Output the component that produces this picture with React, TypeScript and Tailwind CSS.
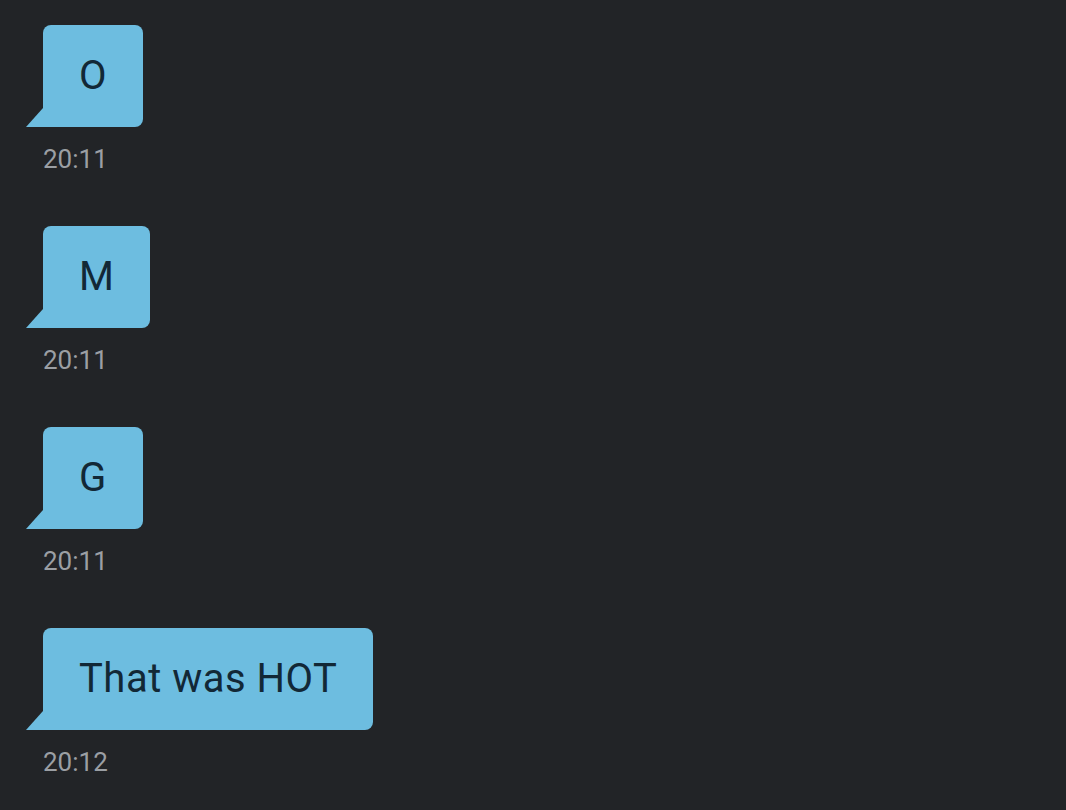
const messages = [
  { text: "O", time: "20:11" },
  { text: "M", time: "20:11" },
  { text: "G", time: "20:11" },
  { text: "That was HOT", time: "20:12" },
];

const Bubble = ({ text }: { text: string }) => {
  return (
    <div className="relative flex h-[102px] w-fit items-center rounded-lg rounded-bl-none bg-[#6dbde0] pl-[36px] pr-[36px]">
      {/* tail */}
      <svg
        className="absolute bottom-0 left-[-17px]"
        width="17"
        height="19"
        viewBox="0 0 17 19"
      >
        <polygon points="0,19 17,0 17,19" fill="#6dbde0" />
      </svg>
      <span className="text-[40px] leading-none tracking-[0.5px] text-[#122836]">{text}</span>
    </div>
  );
};

const App = () => {
  return (
    <div
      className="h-[810px] w-full overflow-hidden bg-[#222427] pl-[43px] pt-[25px]"
      style={{ fontFamily: "Roboto, 'Noto Sans', sans-serif" }}
    >
      <div className="flex flex-col gap-[52px]">
        {messages.map((m, i) => (
          <div key={i} className="flex flex-col">
            <Bubble text={m.text} />
            <span className="mt-[17px] text-[26px] leading-[30px] text-[#9b9fa4]">{m.time}</span>
          </div>
        ))}
      </div>
    </div>
  );
};

export default App;
